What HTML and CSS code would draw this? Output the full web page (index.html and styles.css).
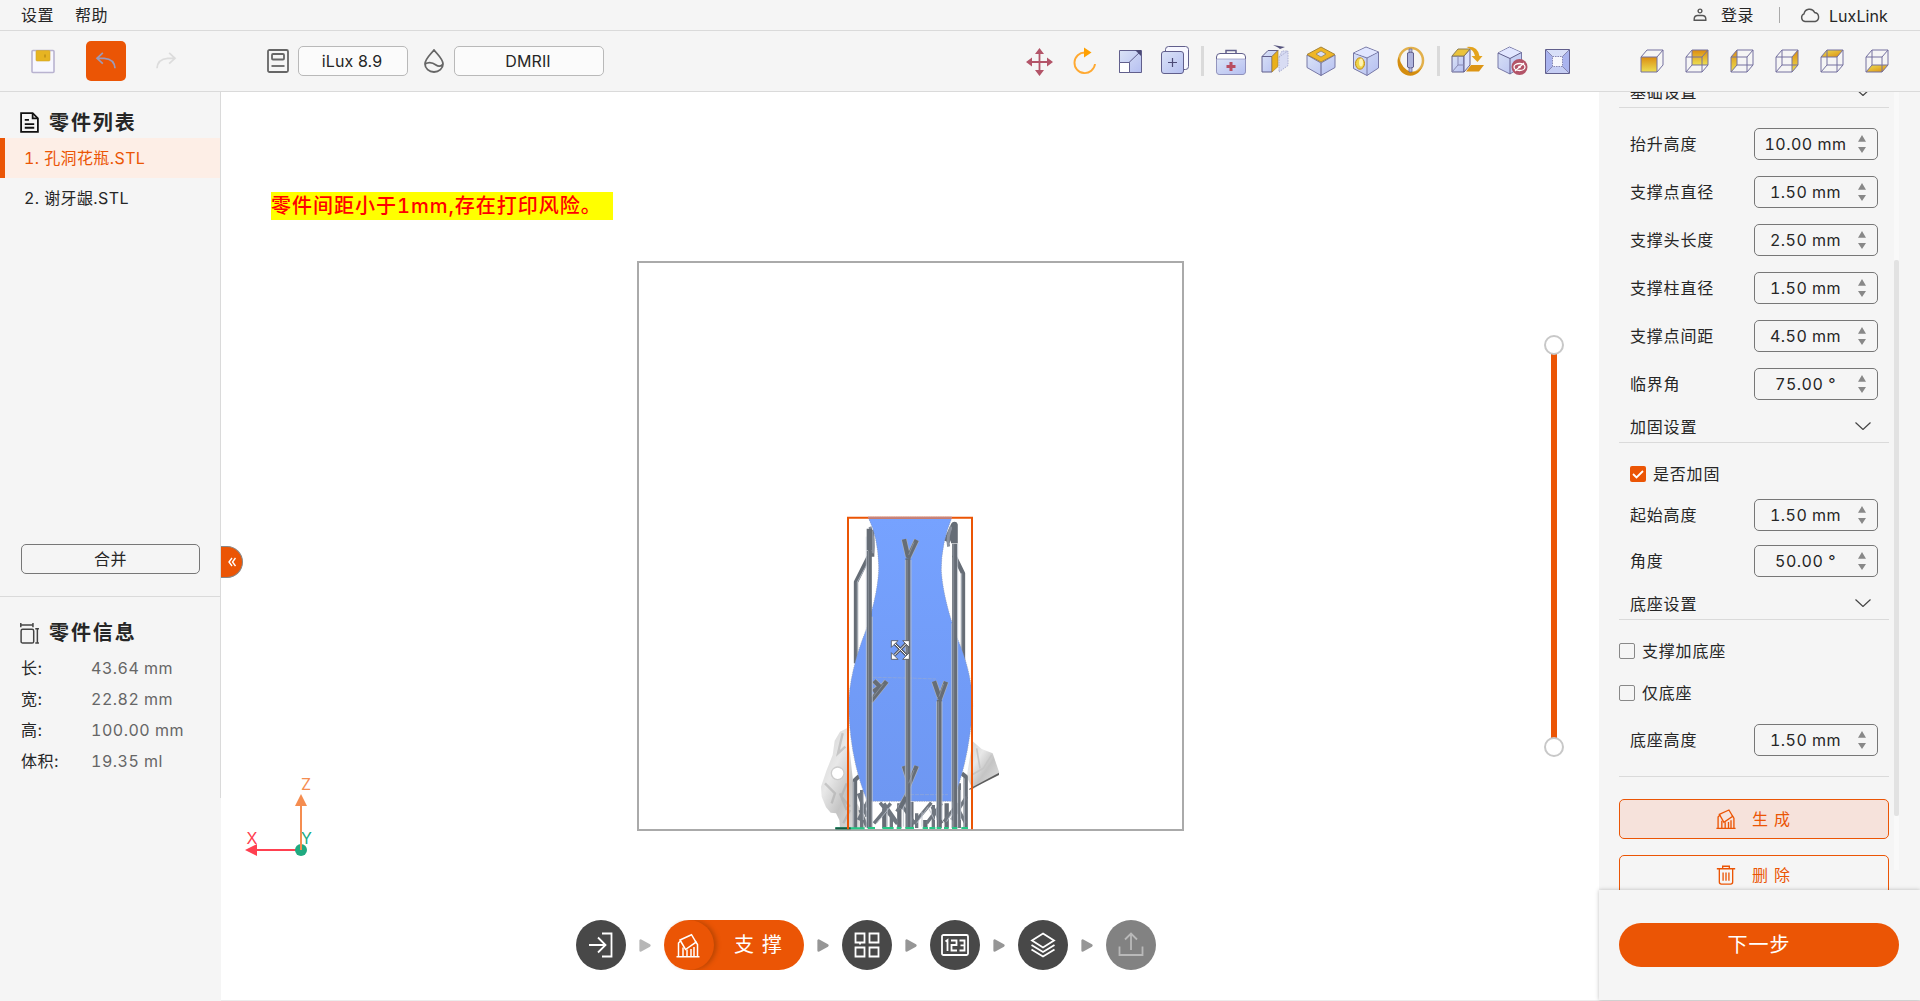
FILE: index.html
```html
<!DOCTYPE html>
<html lang="zh-CN">
<head>
<meta charset="utf-8">
<title>LuxLink</title>
<link rel="stylesheet" href="styles.css">
</head>
<body>
<svg class="defs" width="0" height="0" aria-hidden="true">
  <defs>
    <linearGradient id="gold" x1="0" y1="0" x2="0" y2="1"><stop offset="0" stop-color="#dc8c10"/><stop offset="1" stop-color="#ecdf52"/></linearGradient>
    <linearGradient id="goldx" x1="0" y1="0" x2="1" y2="1"><stop offset="0" stop-color="#ecdf52"/><stop offset="1" stop-color="#dc8c10"/></linearGradient>
    <linearGradient id="blue" x1="0" y1="0" x2="1" y2="1"><stop offset="0" stop-color="#dbe3f6"/><stop offset="1" stop-color="#b5bff1"/></linearGradient>
    <linearGradient id="vase" x1="0" y1="0" x2="0" y2="1"><stop offset="0" stop-color="#76a2ff"/><stop offset="1" stop-color="#6e97f2"/></linearGradient>
    <linearGradient id="bone" x1="0" y1="0" x2="1" y2="1"><stop offset="0" stop-color="#d0d0d0"/><stop offset=".35" stop-color="#e8e8e8"/><stop offset=".6" stop-color="#c4c4c4"/><stop offset="1" stop-color="#e4e4e4"/></linearGradient>
    <g id="house"><path d="M.5 23.200h23M2.500 23V9.500L5 7M7 23v-9M11 23v-7M15 23v-7.500M18 23v-9.500M21.500 23V11l-2.300-3.500"/><path d="M4 6.500L15.500 1.200l4.500 7.500L9.500 16z"/></g>
  </defs>
</svg>

<header class="menubar">
  <nav class="menu"><span>设置</span><span>帮助</span></nav>
  <div class="account">
    <svg class="user" viewBox="0 0 14 14"><circle cx="7" cy="3" r="1.900"/><path d="M1.200 12.300v-1.500a3.500 3.500 0 0 1 3.500-3.300h4.600a3.500 3.500 0 0 1 3.500 3.300v1.500z"/></svg>
    <span class="login">登录</span>
    <i class="bar"></i>
    <svg class="cloud" viewBox="0 0 20 15"><path d="M5 13.500a4 4 0 0 1-1-7.600A5.600 5.600 0 0 1 14.600 4.500a4.600 4.600 0 0 1 .600 9z"/></svg>
    <span class="brand">LuxLink</span>
  </div>
</header>

<div class="toolbar">
  <svg class="save" viewBox="0 0 24 24"><rect x="1" y="1" width="22" height="22" rx="1" fill="#f7f7ff" stroke="#b9b3d0" stroke-width="1.600"/><rect x="5" y="1" width="14" height="10.500" rx="1" fill="#e6b422" stroke="#d0a52c" stroke-width=".6"/><path d="M14 5v3" stroke="#a87c10"/></svg>
  <button class="undo"><svg viewBox="0 0 24 20"><path d="M8.500 1L2 7l6.500 6M2 7h8c7 .5 11.500 4 12 11" fill="none" stroke="#9d9ab8" stroke-width="1.900"/></svg></button>
  <svg class="redo" viewBox="0 0 24 20"><path d="M15.500 1L22 7l-6.500 6M22 7h-8C7 7.500 2.500 11 2 18" fill="none" stroke="#dcdcdc" stroke-width="1.900"/></svg>
  <svg class="printer" viewBox="0 0 22 24"><rect x="1" y="1" width="20" height="22" rx="1.500"/><rect x="5" y="5" width="12" height="5.500" rx="1"/><path d="M4.500 17h13"/></svg>
  <div class="pick machine">iLux 8.9</div>
  <svg class="drop" viewBox="0 0 20 24"><path d="M10 1C6 6 1 10 1 15a9 8 0 0 0 18 0c0-5-5-9-9-14zM1 15c5-3 9-.5 11 1s5 2 7-1"/></svg>
  <div class="pick resin">DMRII</div>

  <div class="tools">
    <svg viewBox="0 0 32 32"><path d="M15.500 6v22M4.500 17h22" stroke="#b35468" stroke-width="1.800"/><path d="M15.500 3l4.500 6h-9zM15.500 31l4.500-6h-9zM2 17l6-4.500v9zM29 17l-6-4.500v9z" fill="#b35468"/></svg>
    <svg viewBox="0 0 32 32"><path d="M16 7.500A10.300 10.300 0 1 0 26 19" fill="none" stroke="#ffa931" stroke-width="1.900"/><path d="M15 2.500l7.500 5-7.500 5z" fill="#ffa000"/></svg>
    <svg viewBox="0 0 32 32"><path d="M5.500 5.500h22v22h-22z" fill="url(#blue)" stroke="#615f8c"/><path d="M5.500 17.500h10v10h-10z" fill="#fff" stroke="#615f8c"/><path d="M15 17.500L27 6" stroke="#615f8c"/><path d="M21 5h6v6z" fill="#4c4a76"/></svg>
    <svg viewBox="0 0 32 32"><rect x="6.500" y="1.500" width="23" height="23" rx="3" fill="#f7f7ff" stroke="#615f8c"/><rect x="2.500" y="6.500" width="22" height="22" rx="2.500" fill="url(#blue)" stroke="#615f8c"/><path d="M13.500 13v9M9 17.500h9" stroke="#4c4a76" stroke-width="1.200"/></svg>
    <i></i>
    <svg viewBox="0 0 32 32"><path d="M11 8V5.500h10V8" fill="none" stroke="#615f8c" stroke-width="1.500"/><rect x="1.500" y="8.500" width="29" height="21" rx="3.500" fill="#fff" stroke="#615f8c"/><path d="M1.500 14h29v12.500a3 3 0 0 1-3 3h-23a3 3 0 0 1-3-3z" fill="url(#blue)" stroke="#8f91bb" stroke-width=".7"/><path d="M16 17v9M11.500 21.500h9" stroke="#b84d61" stroke-width="3"/></svg>
    <svg viewBox="0 0 32 32"><path d="M2 11.500h10V27H2zM2 11.500l6-6h10l-6 6" fill="url(#blue)" stroke="#615f8c"/><path d="M12 11.500l6-6v16L12 27z" fill="#e9b019" stroke="#a58337" stroke-width=".7"/><path d="M19 12l9-6v14.500L19 27zM19 12l3-6h6" fill="#d8dcf3" stroke="#aaaed0" stroke-dasharray="1.500 1"/><path d="M13 0l12 2-5 2-2-1.500z" fill="#55537d"/></svg>
    <svg viewBox="0 0 32 32"><path d="M2 10l14 8 14-8v12.500L16 30.500 2 22.500z" fill="url(#blue)" stroke="#7778a6"/><path d="M16 18v12.500" stroke="#615f8c"/><path d="M2 9.500L16 2l14 7.500L16 17z" fill="#efb626" stroke="#a58337"/><path d="M11 9l5-3 5 3-5 3z" fill="#d6dcf6" stroke="#8b7c54" stroke-width=".7"/></svg>
    <svg viewBox="0 0 32 32"><path d="M3.500 8L16 2l12.500 5v16L17 30.500 3.500 23.500z" fill="url(#blue)" stroke="#7778a6"/><path d="M3.500 8L17 13l11.500-6M17 13v17.500" fill="none" stroke="#7778a6"/><path d="M4.500 8L16 2.800 27.500 7 17 12z" fill="#e1e6ff"/><ellipse cx="10" cy="18.500" rx="4.500" ry="5.700" fill="#eed54a" stroke="#c38a12"/><ellipse cx="11" cy="17.500" rx="2" ry="4" fill="#fff3b3"/></svg>
    <svg viewBox="0 0 32 32"><ellipse cx="16" cy="15.500" rx="12" ry="12.500" fill="none" stroke="#e2b04b" stroke-width="2.500"/><path d="M3.500 12A12.500 13.500 0 0 0 27 22q-4 5.500-11 5Q7 24 3.500 12z" fill="#d48d0f"/><path d="M12.500 8q3.500-2 6 0v14q-3 3-6 0z" fill="#aeb4dd" stroke="#615f8c"/><path d="M14 4h3v3h-3zM14 23h3v4h-3z" fill="#b8bddf" stroke="#615f8c" stroke-width=".7"/></svg>
    <i></i>
    <svg viewBox="0 0 32 32"><path d="M1 11h12v16H1z" fill="url(#blue)" stroke="#615f8c"/><path d="M13 11l6-7v16l-6 7z" fill="#dde2fb" stroke="#615f8c"/><path d="M1 11l6-7h12l-6 7z" fill="#eac33c" stroke="#8b7c54"/><path d="M1 27l6-7h6M7 20v-9" fill="none" stroke="#8788b2"/><path d="M15.500 2q11-1.500 13 9h3l-5 6-6-6h3.500q-1-6-8.500-9z" fill="#e4a31c"/><path d="M20 20h13l-5 6.500H15z" fill="#dd9514"/></svg>
    <svg viewBox="0 0 32 32"><path d="M2 8L13.500 2l12 5.500v14L14 29 2 23z" fill="url(#blue)" stroke="#7778a6"/><path d="M2.500 8L13.500 2.500 25 7.500 14 13z" fill="#e1e6ff"/><path d="M2 8l12 5.500 11.500-6M14 13.500V29" fill="none" stroke="#615f8c"/><circle cx="23.500" cy="22" r="8" fill="#b35468"/><ellipse cx="23.500" cy="22" rx="5.500" ry="3.500" fill="none" stroke="#fff" stroke-width="1.300"/><circle cx="23.500" cy="22" r="1.300" fill="#fff"/><path d="M19 26l9-8" stroke="#fff" stroke-width="1.200"/></svg>
    <svg viewBox="0 0 32 32"><path d="M4.500 4.500h24v24h-24z" fill="#a9b3ee" stroke="#615f8c"/><path d="M5 5h23l-6.500 6.500h-10z" fill="#d8dff8"/><path d="M5 28h23l-6.500-6.500h-10z" fill="#c5cdf4"/><path d="M11.500 11.500h10v10h-10z" fill="#f7f7fc" stroke="#8788b2" stroke-dasharray="1.500 1"/><path d="M4.500 4.500l7 7M28.500 4.500l-7 7M4.500 28.500l7-7M28.500 28.500l-7-7" stroke="#8788b2"/></svg>
  </div>
  <div class="views">
    <svg viewBox="0 0 32 32"><path d="M5 12h16v15H5z" fill="url(#gold)"/><path class="wire" d="M5 12h16v15H5zM5 12l6-7M21 12l6-7M11 5h16v15l-6 7"/></svg>
    <svg viewBox="0 0 32 32"><path d="M11 5h16v15H11z" fill="url(#gold)"/><path class="wire" d="M5 12h16v15H5zM11 5h16v15H11zM5 12l6-7M21 12l6-7M5 27l6-7M21 27l6-7"/></svg>
    <svg viewBox="0 0 32 32"><path d="M5 12l6-7v15l-6 7z" fill="url(#gold)"/><path class="wire" d="M5 12h16v15H5zM11 5h16v15H11zM5 12l6-7M21 12l6-7M5 27l6-7M21 27l6-7"/></svg>
    <svg viewBox="0 0 32 32"><path d="M21 12l6-7v15l-6 7z" fill="url(#gold)"/><path class="wire" d="M5 12h16v15H5zM11 5h16v15H11zM5 12l6-7M21 12l6-7M5 27l6-7M21 27l6-7"/></svg>
    <svg viewBox="0 0 32 32"><path d="M5 12l6-7h16l-6 7z" fill="url(#goldx)"/><path class="wire" d="M5 12h16v15H5zM11 5h16v15H11zM5 12l6-7M21 12l6-7M5 27l6-7M21 27l6-7"/></svg>
    <svg viewBox="0 0 32 32"><path d="M5 27l6-7h16l-6 7z" fill="url(#goldx)"/><path class="wire" d="M5 12h16v15H5zM11 5h16v15H11zM5 12l6-7M21 12l6-7M5 27l6-7M21 27l6-7"/></svg>
  </div>
</div>

<main class="workspace">
  <aside class="parts">
    <div class="parts-body">
      <section class="list">
        <h2><svg class="doc" viewBox="0 0 18 20"><path d="M1 1h11l5 5v13H1zM4.500 7.500h4M4.500 11.500h9M4.500 15h9"/><path d="M12 1v5h5"/></svg>零件列表</h2>
        <div class="part active">1. 孔洞花瓶.STL</div>
        <div class="part">2. 谢牙龈.STL</div>
      </section>
      <button class="merge">合并</button>
      <section class="info">
        <h2><svg class="dims" viewBox="0 0 18 20"><rect x="1" y="6" width="12" height="13" rx="1.500"/><path d="M.7 0v4M12.300 0v4M1 2h11M14.500 5.500h3.500M14.500 19h3.500M16.500 6v13"/></svg>零件信息</h2>
        <dl>
          <dt>长:</dt><dd>43.64 mm</dd>
          <dt>宽:</dt><dd>22.82 mm</dd>
          <dt>高:</dt><dd>100.00 mm</dd>
          <dt>体积:</dt><dd>19.35 ml</dd>
        </dl>
      </section>
    </div>
  </aside>

  <section class="stage">
    <div class="collapse"><svg viewBox="0 0 8 10"><path d="M4 1L1 5l3 4M7.500 1l-3 4 3 4"/></svg></div>
    <div class="warning">零件间距小于1mm,存在打印风险。</div>
    <div class="platform"></div>
    <svg class="model" viewBox="0 0 660 1020">
      <path d="M142 684L120 695L104 722L98 765L80 810L63 860L65 890L78 922L92 938L108 940L118 960L120 984H196L200 960L165 900z" fill="url(#bone)"/>
      <path d="M128 700l-14 60 22-20M75 850l30 30-10 30M120 880l20 50M140 850l-16 40 26 30M150 930l-20 40" stroke="#a5a5a5" stroke-width="7" fill="none" opacity=".5"/>
      <circle cx="113" cy="820" r="19" fill="#fff" stroke="#ccc" stroke-width="4"/>
      <path d="M518 724L545 747L578 760L598 818L518 868L500 830z" fill="url(#bone)"/>
      <path d="M508 866L597 818V825L508 870z" fill="#5c5c5c"/>
      <path d="M530 745l10 60M575 765l-25 40-35 20" stroke="#c6c6c6" stroke-width="5" fill="none"/>
      <g class="strut">
        <path d="M168 490V246L206 170M489 490V220L462 165"/>
        <path d="M213 170V90M463 130V75L440 125" stroke-width="20"/>
        <path d="M165 984V840L178 828M497 984V830L485 820"/>
        <path d="M253 984V925M298 984V910M376 984V960M440 984V910M334 984V906"/>
      </g>
      <g class="mesh">
        <path d="M185 984V870M478 984V850M274 984V950M350 984V940M400 984V915"/>
        <path d="M175 880l26 70M205 900l-30 60M180 930l20 50M455 890l42 80M500 890l-45 70"/>
        <path d="M222 970l50-60M240 908l52 64M290 965l-38-55M300 908l45 64M342 970l52-62M380 970l45-60M432 965l42-55M396 920l30 50M325 880l-35 55"/>
      </g>
      <path class="pale" d="M161 984V845M493 984V835M172 490V246L208 180M485 490V220M230 970l45-55M350 970l35-50M404 960l-18-35M440 965l30-50M190 870v90M482 870v90M262 925v55M310 915v65M366 935v45M326 920v60"/>
      <path d="M204 52H456Q424 130 424 210Q428 290 470 410Q518 520 518 620Q508 780 458 904H202Q150 780 146 620Q146 520 200 385Q236 270 236 200Q234 110 204 52z" fill="url(#vase)" stroke="#858c9e" stroke-width="1.500" stroke-dasharray="4 3"/>
      <path d="M218 532l110 2 80 3M330 884h114" stroke="#96a9d2" stroke-width="2" stroke-dasharray="12 3" fill="none"/>
      <path d="M210 80q14 40 8 80M454 80q-14 30-8 60" fill="none" stroke="#8b919c" stroke-width="9"/>
      <g class="fork halo"><path d="M324 175L350 120M324 170L312 118M212 604L260 544M220 575L240 560L222 542M418 600L438 545M418 590L402 544M324 860L350 798M324 835L312 798M324 880L300 925"/></g>
      <g class="strut">
        <path d="M208 984V152M324 984V175M418 984V600M464 984V132" stroke-width="15"/>
        <path d="M208 150V86M464 130V72" stroke-width="16"/>
      </g>
      <g class="fork"><path d="M324 175L350 120M324 170L312 118M212 604L260 544M220 575L240 560L222 542M418 600L438 545M418 590L402 544M324 860L350 798M324 835L312 798M324 880L300 925"/></g>
      <path class="shine" d="M326 165l16-38M220 590l30-38M417 590l14-38M326 850l16-40"/>
      <path class="pale" d="M199 984V110M217 984V350M316 890V180M333 984V180M410 960V604M426 960V604M455 984V370M473 984V130"/>
      <path class="shine" d="M205 984V152M321 984V180M415 984V604M461 984V132"/>
      <path d="M106 985h88M203 984h22M247 984h34M290 984h14M316 984h26M368 984h16M388 984h18M410 984h14M432 984h14M456 984h16M484 984h20" stroke="#24c985" stroke-width="6"/>
      <path d="M106 985h46" stroke="#175844" stroke-width="6"/>
      <path d="M144 988V53H516V988" fill="none" stroke="#eb5505" stroke-width="6"/>
      <path d="M204 53H456" stroke="#c58480" stroke-width="6"/>
      <g fill="#fff" stroke="#53565d" stroke-width="2.500"><path d="M284 431l34 34M318 431l-34 34" stroke="#53565d" stroke-width="9"/><path d="M284 431l34 34M318 431l-34 34" stroke="#fff" stroke-width="3"/><path d="M274 422h20l-20 20zM328 422h-20l20 20zM274 478h20l-20-20zM328 478h-20l20-20z"/></g>
    </svg>
    <svg class="axes" viewBox="0 0 90 100">
      <path d="M56 83H17" stroke="#ff4050" stroke-width="2"/><path d="M5 83l12-6v12z" fill="#ff4050"/>
      <circle cx="61" cy="83" r="6" fill="#20aa80"/>
      <path d="M61 83V37" stroke="#f58d50" stroke-width="2"/><path d="M61 27l6 12H55z" fill="#f58d50"/>
      <text x="6.500" y="77" fill="#ff4050">X</text><text x="61" y="77" fill="#20aa80">Y</text><text x="61" y="23" fill="#f58d50">Z</text>
    </svg>
    <div class="slider"><b></b><b></b></div>

    <nav class="steps">
      <span class="step"><svg viewBox="0 0 26 26"><path d="M1 13h16M10 5.500l7.500 7.500-7.500 7.500M14 1.500h9.500v23H14"/></svg></span>
      <svg class="next first" viewBox="0 0 11 12"><path d="M1.500 1.500v9L9.500 6z"/></svg>
      <span class="current"><span class="knob"><svg viewBox="0 0 24 24"><use href="#house"/></svg></span><em>支撑</em></span>
      <svg class="next" viewBox="0 0 11 12"><path d="M1.500 1.500v9L9.500 6z"/></svg>
      <span class="step"><svg viewBox="0 0 26 26"><path d="M1.500 1.500h9v9h-9zM15.500 1.500h9v9h-9zM1.500 15.500h9v9h-9zM15.500 15.500h9v9h-9zM6 10.500v2"/></svg></span>
      <svg class="next" viewBox="0 0 11 12"><path d="M1.500 1.500v9L9.500 6z"/></svg>
      <span class="step"><svg class="num" viewBox="0 0 28 22"><rect x="1" y="1" width="26" height="20" rx="1.500"/><path d="M4.500 7.500L6.500 6v11M10 6.500h5.500v4.500H10.500v5.500H16M18.500 6.500h5v10h-5M19.500 11.300h4"/></svg></span>
      <svg class="next" viewBox="0 0 11 12"><path d="M1.500 1.500v9L9.500 6z"/></svg>
      <span class="step"><svg viewBox="0 0 26 26"><path d="M13 1.500l11 7-11 7-11-7zM1.500 13L13 20l11.500-7M1.500 17.500L13 24.500l11.500-7"/></svg></span>
      <svg class="next" viewBox="0 0 11 12"><path d="M1.500 1.500v9L9.500 6z"/></svg>
      <span class="step off"><svg viewBox="0 0 26 26"><path d="M1.500 14.500v8.500h23v-8.500M13 18V1.500M7 7.500l6-6 6 6"/></svg></span>
    </nav>
  </section>

  <aside class="settings">
    <div class="scroll">
      <div class="pane">
        <h3 class="base"><span>基础设置</span><svg viewBox="0 0 16 8"><path d="M.5.500l7.500 7 7.500-7"/></svg></h3>
        <div class="rows">
          <label>抬升高度<span class="spin"><b>10.00 mm</b><i></i></span></label>
          <label>支撑点直径<span class="spin"><b>1.50 mm</b><i></i></span></label>
          <label>支撑头长度<span class="spin"><b>2.50 mm</b><i></i></span></label>
          <label>支撑柱直径<span class="spin"><b>1.50 mm</b><i></i></span></label>
          <label>支撑点间距<span class="spin"><b>4.50 mm</b><i></i></span></label>
          <label>临界角<span class="spin"><b>75.00 °</b><i></i></span></label>
        </div>
        <h3><span>加固设置</span><svg viewBox="0 0 16 8"><path d="M.5.500l7.500 7 7.500-7"/></svg></h3>
        <div class="check inset"><span class="box on"><svg viewBox="0 0 16 16"><path d="M3 8l3.500 3.500L13 5"/></svg></span>是否加固</div>
        <div class="rows tight">
          <label>起始高度<span class="spin"><b>1.50 mm</b><i></i></span></label>
          <label>角度<span class="spin"><b>50.00 °</b><i></i></span></label>
        </div>
        <h3><span>底座设置</span><svg viewBox="0 0 16 8"><path d="M.5.500l7.500 7 7.500-7"/></svg></h3>
        <div class="check first"><span class="box"></span>支撑加底座</div>
        <div class="check"><span class="box"></span>仅底座</div>
        <div class="rows last">
          <label>底座高度<span class="spin"><b>1.50 mm</b><i></i></span></label>
        </div>
        <button class="act fill"><svg viewBox="0 0 24 24"><use href="#house"/></svg><span>生成</span></button>
        <button class="act"><svg viewBox="0 0 24 24"><path d="M1 4.500h22M8 4.500V1.500h8v3M4 4.500v16a2.500 2.500 0 0 0 2.500 2.500h11a2.500 2.500 0 0 0 2.500-2.500v-16M8.500 9v10M12 9v10M15.500 9v10"/></svg><span>删除</span></button>
      </div>
      <div class="track"><div class="thumb"></div></div>
    </div>
    <footer><button class="go">下一步</button></footer>
  </aside>
</main>
</body>
</html>
```
FILE: styles.css
```css
* { box-sizing: border-box; }
body {
  margin: 0;
  width: 1920px;
  height: 1001px;
  overflow: hidden;
  display: flex;
  flex-direction: column;
  background: #fff;
  color: #262626;
  font: 16px/24px Inter, "Noto Sans CJK SC", sans-serif;
  letter-spacing: .5px;
}
svg { display: block; flex: none; }
.defs { position: absolute; }
button { font: inherit; color: inherit; letter-spacing: inherit; padding: 0; margin: 0; border: 0; }

.menubar {
  height: 31px;
  flex: none;
  background: #f5f5f5;
  border-bottom: 1px solid #dadada;
  display: flex;
  justify-content: space-between;
  align-items: center;
  padding: 0 32px 0 21px;
}
.menu { display: flex; gap: 21px; }
.account { display: flex; align-items: center; }
.account svg { fill: none; stroke: #555; stroke-width: 1.4; }
.user { width: 14px; height: 14px; }
.login { margin-left: 14px; }
.bar { width: 1px; height: 16px; background: #aaa; margin: 0 20px 0 25px; }
.cloud { width: 20px; height: 15px; }
.brand { margin: 2px 0 0 9px; letter-spacing: .1px; }

.toolbar {
  height: 61px;
  flex: none;
  background: #f5f5f5;
  border-bottom: 1px solid #dadada;
  display: flex;
  align-items: center;
  padding-left: 31px;
}
.save { width: 24px; height: 25px; margin-right: 31px; }
.undo { width: 40px; height: 40px; border-radius: 5px; background: #eb5505; display: grid; place-items: center; }
.undo svg { width: 22px; height: 18px; }
.redo { width: 22px; height: 18px; margin: 0 90px 0 29px; }
.printer { width: 22px; height: 24px; }
.drop { width: 20px; height: 24px; margin: 0 10px 0 16px; }
.printer, .drop { fill: none; stroke: #666; stroke-width: 1.8; }
.pick { height: 30px; border: 1px solid #b9b9b9; border-radius: 5px; background: #fbfbfb; text-align: center; line-height: 28px; letter-spacing: .1px; padding-right: 2px; }
.machine { width: 110px; margin-left: 9px; }
.resin { width: 150px; }
.tools { display: flex; align-items: center; margin-left: 413px; }
.tools svg, .views svg { width: 32px; height: 32px; margin: 0 6.5px; overflow: visible; }
.tools i { width: 3px; height: 30px; background: #dadada; margin: 0 4px; }
.views { display: flex; margin-left: 50px; }
.wire { fill: none; stroke: #74709f; stroke-width: 1; }

.workspace { flex: 1; min-height: 0; display: grid; grid-template-columns: 221px 1fr 321px; }
.parts { background: #f5f5f5; }
.parts-body { height: 706px; border-right: 1px solid #dadada; display: flex; flex-direction: column; }
h2 { margin: 0; font-size: 20px; line-height: 30px; letter-spacing: 1.9px; display: flex; align-items: center; gap: 10px; padding-left: 20px; }
h2 svg { width: 19px; height: 21px; fill: none; stroke: #111; stroke-width: 1.7; }
.list { height: 452px; padding-top: 15px; }
.part { height: 40px; line-height: 40px; padding-left: 24px; font-variant-numeric: tabular-nums; letter-spacing: .4px; }
.list h2 { height: 31px; }
.part.active { background: #fdeee6; color: #eb5505; border-left: 5px solid #eb5505; padding-left: 19px; }
.merge { height: 30px; width: 179px; margin-left: 21px; background: #f5f5f5; border: 1px solid #777; border-radius: 5px; }
.info { margin-top: 22px; border-top: 1px solid #dadada; padding-top: 21px; }
.info h2 svg { stroke: #444; stroke-width: 1.4; }
dl { display: grid; grid-template-columns: 70px 1fr; grid-auto-rows: 31px; line-height: 31px; margin: 5px 0 0 21px; }
dt, dd { margin: 0; }
dd { color: #666; letter-spacing: .5px; font-variant-numeric: tabular-nums; }

/* 3D viewport: overlays sit at free canvas positions */
.stage { position: relative; background: #fff; border-bottom: 1px solid #ececec; }
.collapse { position: absolute; left: 0; top: 454px; width: 22px; height: 32px; background: #eb5505; border: 1px solid #888; border-left: 0; border-radius: 0 16px 16px 0; display: grid; place-items: center; }
.collapse svg { width: 8px; height: 10px; fill: none; stroke: #fff; stroke-width: 1.4; }
.warning { position: absolute; left: 50px; top: 100px; width: 342px; height: 28px; background: #ff0; color: #f00; font-size: 20px; line-height: 29px; font-weight: 500; letter-spacing: 1px; white-space: nowrap; font-variant-numeric: tabular-nums; }
.platform { position: absolute; left: 416px; top: 169px; width: 547px; height: 570px; border: 2px solid #aaa; }
.model { position: absolute; left: 579px; top: 408px; width: 220px; height: 340px; }
.strut { fill: none; stroke: #666d76; stroke-width: 13; stroke-linejoin: round; }
.mesh { fill: none; stroke: #6f767f; stroke-width: 10; }
.fork { fill: none; stroke: #666d76; stroke-width: 13; }
.fork.halo { stroke: #a9b0bd; stroke-width: 17; }
.pale { fill: none; stroke: #b9bfca; stroke-width: 2.5; }
.shine { fill: none; stroke: #878e97; stroke-width: 3; }
.axes { position: absolute; left: 19px; top: 675px; width: 90px; height: 100px; font-size: 16px; letter-spacing: 0; }
.slider { position: absolute; left: 1323px; top: 243px; width: 20px; height: 422px; display: flex; flex-direction: column; justify-content: space-between; background: linear-gradient(#eb5505, #eb5505) center / 6px 400px no-repeat; }
.slider b { width: 20px; height: 20px; border: 2px solid #c8c8c8; border-radius: 50%; background: #fff; }

.steps { position: absolute; left: 355px; top: 828px; display: flex; align-items: center; }
.step { width: 50px; height: 50px; border-radius: 50%; background: #484848; display: grid; place-items: center; }
.step svg { width: 26px; height: 26px; fill: none; stroke: #fff; stroke-width: 1.8; }
.step .num { width: 28px; height: 22px; }
.step.off { background: #828282; }
.step.off svg { stroke: #b9b9b9; }
.next { width: 12px; height: 13px; margin: 0 13px; fill: #969696; stroke: #969696; stroke-width: 2.4; stroke-linejoin: round; }
.next.first { fill: #b7b7b7; stroke: #b7b7b7; }
.current { width: 140px; height: 50px; border-radius: 25px; background: #eb5505; color: #fff; display: flex; align-items: center; }
.knob { width: 50px; height: 50px; border-radius: 50%; display: grid; place-items: center; box-shadow: 3px 0 4px rgba(120, 50, 0, .4); clip-path: inset(0 -10px 0 0); }
.knob svg { width: 24px; height: 25px; fill: none; stroke: #fff; stroke-width: 1.5; margin-right: 2px; }
.current em { font-style: normal; font-size: 20px; letter-spacing: 8px; margin-left: 20px; }

.settings { background: #f5f5f5; display: flex; flex-direction: column; border-bottom: 1px solid #e8e8e8; }
.scroll { height: 798px; overflow: hidden; display: flex; padding-left: 20px; }
.pane { width: 270px; margin-top: -13px; letter-spacing: .8px; }
h3 { margin: 0; font: inherit; height: 30px; padding: 0 10px 0 11px; border-bottom: 1px solid #dadada; display: flex; justify-content: space-between; align-items: center; }
h3 span { margin-bottom: 2px; }
h3 svg { width: 16px; height: 8px; margin-right: 8px; margin-bottom: 3px; fill: none; stroke: #444; stroke-width: 1.2; }
.base { height: 29px; }
.rows { display: grid; gap: 16px; padding: 20px 11px 13px; }
.rows label { display: flex; justify-content: space-between; align-items: center; height: 32px; }
.tight { gap: 14px; padding: 17px 11px 13px; }
.last { padding: 23px 11px 20px; margin-bottom: 22px; border-bottom: 1px solid #dadada; }
.spin { width: 124px; height: 32px; border: 1px solid #777; border-radius: 5px; display: flex; align-items: center; }
.spin b { width: 101px; margin-right: 2px; font-weight: 400; text-align: center; letter-spacing: .5px; font-variant-numeric: tabular-nums; }
.spin i { width: 8px; height: 18px; background: #888; clip-path: polygon(50% 0, 100% 38%, 0 38%, 50% 0, 50% 100%, 0 66%, 100% 66%, 50% 100%); }
.check { display: flex; align-items: center; gap: 7px; height: 16px; margin-top: 26px; }
.check.inset { margin: 23px 0 0 11px; }
.check.first { margin-top: 23px; }
.box { width: 16px; height: 16px; border: 1px solid #888; border-radius: 2px; }
.box.on { background: #eb5505; border: 0; }
.box svg { fill: none; stroke: #fff; stroke-width: 1.8; }
.act { width: 270px; height: 40px; margin-bottom: 16px; border: 1px solid #eb5505; border-radius: 5px; background: transparent; color: #eb5505; display: flex; align-items: center; padding-left: 96px; gap: 16px; }
.act.fill { background: #f6e2db; }
.act svg { width: 20px; height: 20px; fill: none; stroke: #eb5505; stroke-width: 1.6; }
.act span { letter-spacing: 6px; }
.track { width: 5px; height: 778px; margin-left: 5px; background: #f9f9f9; padding-top: 168px; }
.thumb { height: 556px; background: #e2e2e2; border-radius: 2px; }
.settings footer { position: relative; flex: 1; box-shadow: 0 0 4px rgba(0, 0, 0, .25); padding: 33px 20px 0; background: #f5f5f5; }
.go { width: 280px; height: 44px; border-radius: 22px; background: #eb5505; color: #fff; font-size: 20px; letter-spacing: 1px; }
```
